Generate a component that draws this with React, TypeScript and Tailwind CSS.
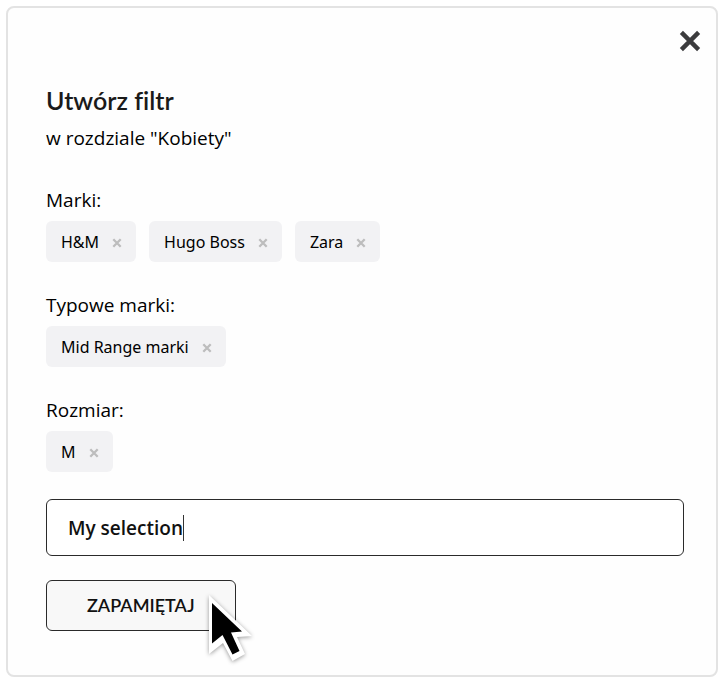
import { useState } from "react";

interface FilterGroup {
  label: string;
  values: string[];
}

const initialGroups: FilterGroup[] = [
  { label: "Marki:", values: ["H&M", "Hugo Boss", "Zara"] },
  { label: "Typowe marki:", values: ["Mid Range marki"] },
  { label: "Rozmiar:", values: ["M"] },
];

interface ChipProps {
  text: string;
  onRemove: () => void;
}

const Chip = ({ text, onRemove }: ChipProps) => (
  <li className="flex h-[41px] items-center gap-[13px] rounded-md bg-[#f2f2f4] pl-[15px] pr-[14px]">
    <span className="font-['Noto_Sans','Open_Sans',sans-serif] text-[16px] leading-6 text-black">
      {text}
    </span>
    <button
      type="button"
      aria-label={`Usuń ${text}`}
      onClick={onRemove}
      className="pt-0.5"
    >
      <svg
        width="10"
        height="10"
        viewBox="0 0 10 10"
        stroke="#bdbdbd"
        strokeWidth="2.3"
      >
        <path d="M1.3 1.3 8.7 8.7M8.7 1.3 1.3 8.7" />
      </svg>
    </button>
  </li>
);

const Pointer = () => (
  <svg
    className="pointer-events-none absolute -right-5 top-3 drop-shadow-[0_1px_2px_rgba(0,0,0,0.4)]"
    width="56"
    height="76"
    viewBox="0 0 56 76"
    aria-hidden="true"
  >
    <path fill="#fff" d="M9 3 52 44 37 45 45 62 32.5 69 23 51 9 62Z" />
    <path
      fill="#000"
      d="M12 11 42 39.5 31 40.5 39.5 59 32.5 62.5 22.5 43 12 51.5Z"
    />
  </svg>
);

const App = () => {
  const [groups, setGroups] = useState(initialGroups);
  const [name, setName] = useState("My selection");

  const removeValue = (label: string, value: string) => {
    setGroups((prev) =>
      prev.map((group) =>
        group.label === label
          ? { ...group, values: group.values.filter((v) => v !== value) }
          : group
      )
    );
  };

  return (
    <main className="min-h-screen bg-white pb-2 pl-1.5 pr-1 pt-1.5 font-['Open_Sans','Noto_Sans',sans-serif] text-black">
      <form
        className="flex flex-col rounded-lg border-2 border-[#e3e3e3] bg-[#fefefe] pb-11 pl-[38px] pr-8 pt-[22px]"
        onSubmit={(e) => e.preventDefault()}
      >
        <button
          type="button"
          aria-label="Zamknij"
          className="-mr-[17px] self-end"
        >
          <svg
            width="22"
            height="22"
            viewBox="0 0 22 22"
            stroke="#3b3b3d"
            strokeWidth="4.4"
          >
            <path d="M2.4 2.4 19.6 19.6M19.6 2.4 2.4 19.6" />
          </svg>
        </button>

        <h1 className="mt-[30px] font-['Lato',sans-serif] text-[25px] font-semibold leading-9 text-[#1a1a1a] [font-variant-ligatures:none]">
          Utwórz filtr
        </h1>
        <p className="mt-0.5 text-[19px] leading-9">w rozdziale "Kobiety"</p>

        <div className="mt-7 flex flex-col gap-[27px]">
          {groups.map((group) => (
            <section key={group.label}>
              <h2 className="mb-[5px] text-[19px] leading-8">{group.label}</h2>
              <ul className="flex flex-wrap gap-[13px]">
                {group.values.map((value) => (
                  <Chip
                    key={value}
                    text={value}
                    onRemove={() => removeValue(group.label, value)}
                  />
                ))}
              </ul>
            </section>
          ))}
        </div>

        <div className="relative mt-[27px] text-[19px] font-semibold leading-7">
          <input
            type="text"
            aria-label="Nazwa filtra"
            value={name}
            onChange={(e) => setName(e.target.value)}
            className="h-[57px] w-full rounded-md border border-[#2a2a2a] bg-white px-[21px] text-[#111] caret-transparent outline-none"
          />
          <div
            className="pointer-events-none absolute inset-y-0 left-[22px] flex items-center"
            aria-hidden="true"
          >
            <span className="invisible whitespace-pre">{name}</span>
            <span className="h-[26px] w-px bg-[#333]" />
          </div>
        </div>

        <div className="relative mt-6 self-start">
          <button
            type="submit"
            className="h-[51px] rounded-md border border-[#2a2a2a] bg-[#f8f8f8] px-10 font-['Lato',sans-serif] text-[18px] font-semibold text-[#111]"
          >
            ZAPAMIĘTAJ
          </button>
          <Pointer />
        </div>
      </form>
    </main>
  );
};

export default App;
